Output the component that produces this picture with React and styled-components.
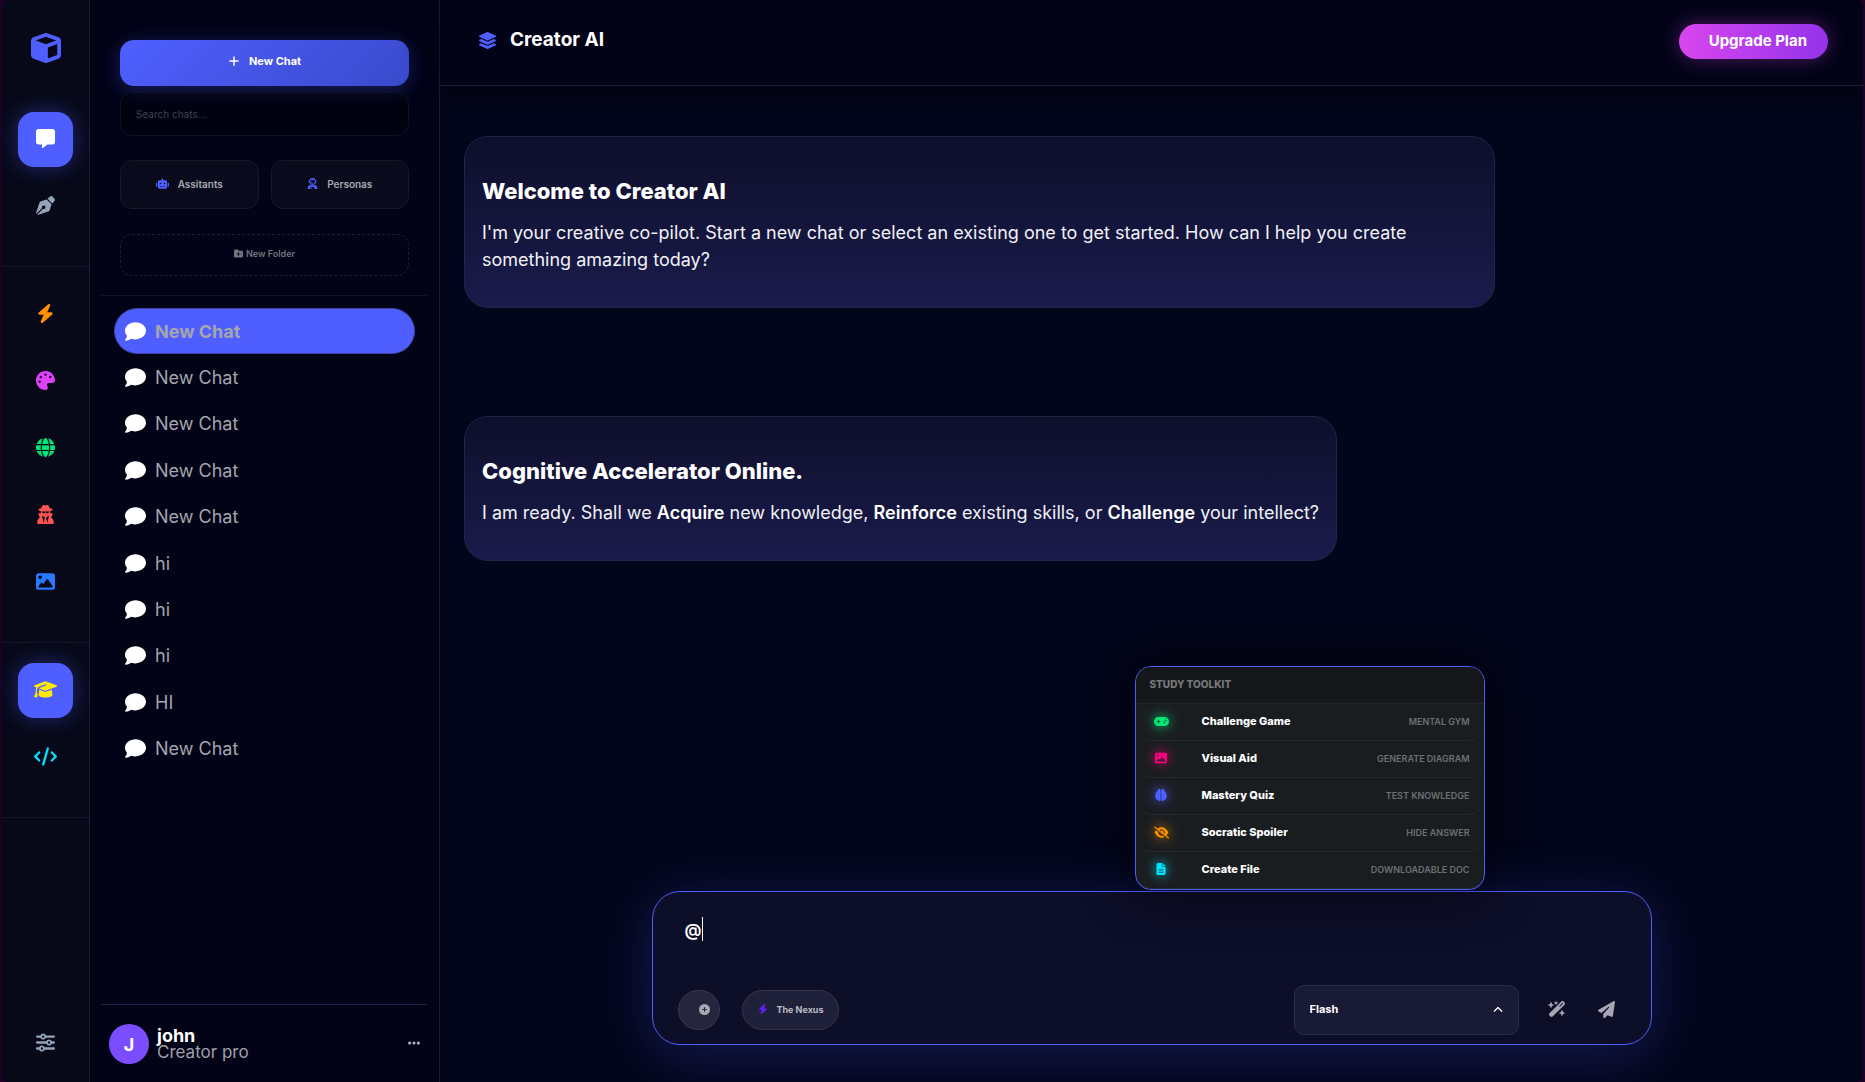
import React, { useState } from "react";
import styled, { createGlobalStyle } from "styled-components";
import {
  FaBolt,
  FaBrain,
  FaChevronUp,
  FaCirclePlus,
  FaCode,
  FaComment,
  FaCube,
  FaEllipsis,
  FaEyeSlash,
  FaFileLines,
  FaFolderPlus,
  FaGamepad,
  FaGlobe,
  FaGraduationCap,
  FaImage,
  FaLayerGroup,
  FaMessage,
  FaPalette,
  FaPaperPlane,
  FaPenNib,
  FaPlus,
  FaRobot,
  FaSliders,
  FaUserAstronaut,
  FaUserSecret,
  FaWandMagicSparkles,
} from "react-icons/fa6";

const GlobalStyle = createGlobalStyle`
  * {
    box-sizing: border-box;
  }

  body {
    margin: 0;
    background-color: #1c0026;
    color: #ffffff;
    font-family: Inter, "Liberation Sans", sans-serif;
  }

  button, input, select, textarea {
    font-family: inherit;
    color: inherit;
    margin: 0;
  }

  button {
    cursor: pointer;
  }

  svg {
    display: block;
    flex-shrink: 0;
  }
`;

const Shell = styled.div`
  display: flex;
  height: 100vh;
  margin: 0 2px;
  border-radius: 8px;
  overflow: hidden;
  background-color: #020317;
`;

const Rail = styled.nav`
  display: flex;
  flex-direction: column;
  flex-shrink: 0;
  width: 88px;
  background-color: #070919;
  border-right: 1px solid #1b1d30;
`;

const Logo = styled.a`
  display: flex;
  justify-content: center;
  padding: 33px 0 29px;
  font-size: 30px;
  color: #4f5fff;
`;

const RailGroup = styled.div`
  display: flex;
  flex-direction: column;
  align-items: center;
  gap: 12px;
  padding: 20px 0 32px;
  border-bottom: 1px solid #14162a;
`;

const RailButton = styled.button`
  display: flex;
  align-items: center;
  justify-content: center;
  width: 55px;
  height: 55px;
  padding: 0 0 2px;
  border: none;
  border-radius: 16px;
  font-size: ${(props) => (props.$wide ? "23px" : "19px")};
  color: ${(props) => props.$color || "#94a3b8"};
  background-color: ${(props) => (props.$active ? "#4f5fff" : "transparent")};
  box-shadow: ${(props) =>
    props.$active ? "0 0 20px rgba(79, 95, 255, 0.4)" : "none"};
`;

const RailFooter = styled.div`
  display: flex;
  justify-content: center;
  margin-top: auto;
  padding-bottom: 11px;
`;

const Sidebar = styled.aside`
  display: flex;
  flex-direction: column;
  flex-shrink: 0;
  width: 350px;
  padding: 0 12px 0 11px;
  background-color: #020317;
  border-right: 1px solid #1b1d38;
`;

const SidebarTop = styled.div`
  display: flex;
  flex-direction: column;
  padding: 40px 18px 19px 19px;
  border-bottom: 1px solid #101226;
`;

const NewChatButton = styled.button`
  display: flex;
  align-items: center;
  justify-content: center;
  gap: 9px;
  height: 46px;
  padding: 0 0 4px;
  border: none;
  border-radius: 14px;
  font-size: 11px;
  font-weight: 700;
  background: linear-gradient(135deg, #4f5fff, #3a4acc);
  box-shadow: 0 4px 20px rgba(79, 95, 255, 0.3);
`;

const SearchInput = styled.input`
  height: 44px;
  margin-top: 6px;
  padding: 0 15px 1px;
  border: 1px solid #10121f;
  border-radius: 12px;
  font-size: 10px;
  background-color: rgba(0, 0, 0, 0.3);
  outline: none;

  &::placeholder {
    color: #3f4152;
    opacity: 1;
  }
`;

const Shortcuts = styled.div`
  display: grid;
  grid-template-columns: 1fr 1fr;
  gap: 12px;
  margin-top: 24px;
`;

const ShortcutButton = styled.button`
  display: flex;
  align-items: center;
  justify-content: center;
  gap: 9px;
  height: 49px;
  padding: 0 0 2px;
  border: 1px solid #171929;
  border-radius: 12px;
  font-size: 10px;
  font-weight: 600;
  color: #a7a8b2;
  background-color: #090b1c;

  svg {
    font-size: ${(props) => (props.$wide ? "13px" : "11px")};
    color: #4f5fff;
  }
`;

const NewFolderButton = styled.button`
  display: flex;
  align-items: center;
  justify-content: center;
  gap: 3px;
  height: 42px;
  margin-top: 25px;
  padding: 0 0 3px;
  border: 1px dashed #1d1f31;
  border-radius: 12px;
  font-size: 9px;
  font-weight: 600;
  color: #72757f;
  background-color: transparent;
`;

const ChatList = styled.ul`
  display: grid;
  grid-auto-rows: 1fr;
  min-height: 464px;
  margin: 12px 0 0;
  padding: 0 12px 0 13px;
  list-style: none;
`;

const ChatItem = styled.button`
  display: flex;
  align-items: center;
  gap: 9px;
  width: 100%;
  height: 46px;
  padding: 0 10px;
  border: 1px solid ${(props) => (props.$active ? "#3c44a0" : "transparent")};
  border-radius: 23px;
  font-size: 18px;
  font-weight: ${(props) => (props.$active ? 700 : 400)};
  color: #a5a5ad;
  background-color: ${(props) => (props.$active ? "#4f5fff" : "transparent")};

  svg {
    font-size: 21px;
    color: #ffffff;
  }
`;

const Profile = styled.div`
  display: flex;
  align-items: center;
  gap: 8px;
  margin-top: auto;
  padding: 19px 6px 18px 8px;
  border-top: 1px solid #20224a;
`;

const Avatar = styled.div`
  display: flex;
  align-items: center;
  justify-content: center;
  width: 40px;
  height: 40px;
  border-radius: 50%;
  font-size: 18px;
  font-weight: 700;
  background-color: #7c4dff;
`;

const ProfileText = styled.div`
  flex: 1;
  font-size: 17px;
  line-height: 17px;
  color: #a0a0a8;

  strong {
    display: block;
    font-size: 18px;
    color: #ffffff;
  }
`;

const MenuButton = styled.button`
  padding: 0 0 2px;
  border: none;
  font-size: 14px;
  color: #b4b5bd;
  background-color: transparent;
`;

const Main = styled.main`
  display: flex;
  flex-direction: column;
  flex: 1;
  min-width: 0;
  background-color: #03051a;
`;

const Header = styled.header`
  display: flex;
  align-items: center;
  justify-content: space-between;
  height: 86px;
  padding: 0 35px 3px 38px;
  border-bottom: 1px solid #1c1e32;
  background-color: #020317;
  box-shadow: 0 4px 24px rgba(0, 0, 0, 0.5);
`;

const Title = styled.h1`
  display: flex;
  align-items: center;
  gap: 13px;
  margin: 0;
  padding-bottom: 2px;
  font-size: 19px;
  line-height: 24px;
  font-weight: 700;

  svg {
    color: #4f5fff;
  }
`;

const UpgradeButton = styled.button`
  height: 35px;
  padding: 0 21px 1px 30px;
  border: none;
  border-radius: 18px;
  font-size: 15px;
  font-weight: 700;
  background: linear-gradient(90deg, #d946ef, #9333ea);
  box-shadow: 0 0 20px rgba(217, 70, 239, 0.35);
`;

const Messages = styled.section`
  display: flex;
  flex-direction: column;
  align-items: flex-start;
  flex: 1;
  gap: 108px;
  min-height: 0;
  padding: 50px 24px 0;
`;

const MessageCard = styled.article`
  max-width: 75%;
  padding: 38px 17px 34px;
  border: 1px solid #22244a;
  border-radius: 24px;
  background: linear-gradient(180deg, #0e0f2b, #1a1b4b);

  h2 {
    margin: 0 0 12px;
    font-size: 22px;
    line-height: 32px;
    font-weight: 800;
  }

  p {
    margin: 0;
    font-size: 18px;
    line-height: 27px;
    color: #f1f1f6;
  }

  strong {
    font-weight: 600;
    color: #ffffff;
  }
`;

const ComposerArea = styled.div`
  padding: 0 24px 37px;
`;

const Composer = styled.form`
  position: relative;
  display: flex;
  flex-direction: column;
  max-width: 1000px;
  margin: 0 auto;
  padding: 25px 36px 9px 25px;
  border: 1px solid #4f5fff;
  border-radius: 28px;
  background-color: #0d0e28;
  box-shadow: 0 10px 60px rgba(79, 95, 255, 0.25);
`;

const PromptField = styled.div`
  position: relative;
  display: flex;
`;

const Prompt = styled.textarea`
  flex: 1;
  height: 68px;
  padding: 0 7px;
  border: none;
  outline: none;
  resize: none;
  font-size: 17px;
  font-weight: 600;
  line-height: 26px;
  caret-color: transparent;
  background-color: transparent;
`;

const Caret = styled.span`
  position: absolute;
  top: 0;
  left: 24px;
  width: 1px;
  height: 24px;
  background-color: #ffffff;
`;

const ComposerBar = styled.div`
  display: flex;
  align-items: center;
`;

const AttachButton = styled.button`
  display: flex;
  align-items: center;
  justify-content: flex-end;
  width: 42px;
  height: 40px;
  padding: 0 9px 2px 0;
  border: 1px solid #37384e;
  border-radius: 20px;
  font-size: 11px;
  color: #a9a9b4;
  background-color: #25263d;
`;

const ModeButton = styled.button`
  display: flex;
  align-items: center;
  gap: 9px;
  height: 40px;
  margin-left: 22px;
  padding: 0 14px 2px 15px;
  border: 1px solid #34354d;
  border-radius: 20px;
  font-size: 9px;
  font-weight: 700;
  color: #bcbcc4;
  background-color: #1f2039;

  svg {
    font-size: 10px;
    color: #651fff;
  }
`;

const ModelPicker = styled.div`
  position: relative;
  display: flex;
  align-items: center;
  width: 225px;
  margin-left: auto;

  svg {
    position: absolute;
    right: 16px;
    font-size: 10px;
    pointer-events: none;
  }
`;

const ModelSelect = styled.select`
  appearance: none;
  width: 100%;
  height: 50px;
  padding: 0 15px 2px;
  border: 1px solid #2b2c46;
  border-radius: 10px;
  outline: none;
  font-size: 11px;
  font-weight: 700;
  background-color: #191a35;
`;

const ActionButton = styled.button`
  margin-left: ${(props) => props.$gap};
  padding: 0 0 2px;
  border: none;
  font-size: 17px;
  color: #a9a5b4;
  background-color: transparent;
`;

const Toolkit = styled.div`
  position: absolute;
  right: 166px;
  bottom: calc(100% + 2px);
  width: 350px;
  border: 1px solid #4f5fff;
  border-radius: 16px;
  overflow: hidden;
  background-color: #1a1d20;
  box-shadow: 0 0 50px rgba(0, 0, 0, 0.6);
`;

const ToolkitTitle = styled.div`
  padding: 0 14px 2px;
  border-bottom: 1px solid #232528;
  font-size: 10px;
  line-height: 34px;
  font-weight: 800;
  color: #77797c;
  background-color: #16171a;
`;

const Tool = styled.button`
  display: flex;
  align-items: center;
  width: 100%;
  height: 37px;
  padding: 0 14px 2px;
  border: none;
  border-bottom: 1px solid #26292c;
  border-radius: 16px;
  text-align: left;
  background-color: transparent;
`;

const ToolIcon = styled.span`
  display: flex;
  justify-content: center;
  width: 23px;
  margin-right: 29px;
  font-size: ${(props) => (props.$wide ? "15px" : "12px")};
  color: ${(props) => props.$color};
  filter: drop-shadow(0 0 6px ${(props) => props.$color});
`;

const ToolName = styled.span`
  flex: 1;
  font-size: 11px;
  font-weight: 800;
`;

const ToolHint = styled.span`
  font-size: 9px;
  font-weight: 600;
  color: #6d6f72;
`;

const railGroups = [
  [
    { id: "chat", label: "Chat", icon: FaMessage, color: "#ffffff", active: true },
    { id: "write", label: "Write", icon: FaPenNib },
  ],
  [
    { id: "flash", label: "Flash", icon: FaBolt, color: "#ff9100" },
    { id: "design", label: "Design", icon: FaPalette, color: "#e040fb" },
    { id: "web", label: "Web", icon: FaGlobe, color: "#00e676" },
    { id: "agent", label: "Agent", icon: FaUserSecret, color: "#ff5252" },
    { id: "images", label: "Images", icon: FaImage, color: "#2979ff" },
  ],
  [
    {
      id: "study",
      label: "Study",
      icon: FaGraduationCap,
      color: "#ffea00",
      active: true,
      wide: true,
    },
    { id: "code", label: "Code", icon: FaCode, color: "#00e5ff", wide: true },
  ],
];

const chats = [
  "New Chat",
  "New Chat",
  "New Chat",
  "New Chat",
  "New Chat",
  "hi",
  "hi",
  "hi",
  "HI",
  "New Chat",
];

const tools = [
  { name: "Challenge Game", hint: "MENTAL GYM", icon: FaGamepad, color: "#00e676", wide: true },
  { name: "Visual Aid", hint: "GENERATE DIAGRAM", icon: FaImage, color: "#ff0080" },
  { name: "Mastery Quiz", hint: "TEST KNOWLEDGE", icon: FaBrain, color: "#4f5fff" },
  { name: "Socratic Spoiler", hint: "HIDE ANSWER", icon: FaEyeSlash, color: "#ff9100", wide: true },
  { name: "Create File", hint: "DOWNLOADABLE DOC", icon: FaFileLines, color: "#00e5ff" },
];

const NavRail = () => (
  <Rail>
    <Logo href="#" aria-label="Home">
      <FaCube />
    </Logo>
    {railGroups.map((group) => (
      <RailGroup key={group[0].id}>
        {group.map(({ id, label, icon: Icon, color, active, wide }) => (
          <RailButton key={id} aria-label={label} $color={color} $active={active} $wide={wide}>
            <Icon />
          </RailButton>
        ))}
      </RailGroup>
    ))}
    <RailFooter>
      <RailButton aria-label="Settings">
        <FaSliders />
      </RailButton>
    </RailFooter>
  </Rail>
);

const ChatSidebar = () => {
  const [selected, setSelected] = useState(0);

  return (
    <Sidebar>
      <SidebarTop>
        <NewChatButton>
          <FaPlus size={12} />
          New Chat
        </NewChatButton>
        <SearchInput type="search" placeholder="Search chats..." aria-label="Search chats" />
        <Shortcuts>
          <ShortcutButton $wide>
            <FaRobot />
            Assitants
          </ShortcutButton>
          <ShortcutButton>
            <FaUserAstronaut />
            Personas
          </ShortcutButton>
        </Shortcuts>
        <NewFolderButton>
          <FaFolderPlus />
          New Folder
        </NewFolderButton>
      </SidebarTop>
      <ChatList>
        {chats.map((chat, index) => (
          <li key={index}>
            <ChatItem $active={index === selected} onClick={() => setSelected(index)}>
              <FaComment />
              {chat}
            </ChatItem>
          </li>
        ))}
      </ChatList>
      <Profile>
        <Avatar>J</Avatar>
        <ProfileText>
          <strong>john</strong>
          Creator pro
        </ProfileText>
        <MenuButton aria-label="Account menu">
          <FaEllipsis />
        </MenuButton>
      </Profile>
    </Sidebar>
  );
};

const StudyToolkit = () => (
  <Toolkit>
    <ToolkitTitle>STUDY TOOLKIT</ToolkitTitle>
    {tools.map(({ name, hint, icon: Icon, color, wide }) => (
      <Tool key={name} type="button">
        <ToolIcon $color={color} $wide={wide}>
          <Icon />
        </ToolIcon>
        <ToolName>{name}</ToolName>
        <ToolHint>{hint}</ToolHint>
      </Tool>
    ))}
  </Toolkit>
);

const PromptComposer = () => {
  const [prompt, setPrompt] = useState("@");

  return (
    <Composer onSubmit={(event) => event.preventDefault()}>
      {prompt.startsWith("@") && <StudyToolkit />}
      <PromptField>
        <Prompt
          aria-label="Message"
          value={prompt}
          onChange={(event) => setPrompt(event.target.value)}
        />
        {prompt === "@" && <Caret />}
      </PromptField>
      <ComposerBar>
        <AttachButton type="button" aria-label="Attach">
          <FaCirclePlus />
        </AttachButton>
        <ModeButton type="button">
          <FaBolt />
          The Nexus
        </ModeButton>
        <ModelPicker>
          <ModelSelect aria-label="Model" defaultValue="flash">
            <option value="flash">Flash</option>
          </ModelSelect>
          <FaChevronUp />
        </ModelPicker>
        <ActionButton type="button" aria-label="Enhance prompt" $gap="29px">
          <FaWandMagicSparkles size={18} />
        </ActionButton>
        <ActionButton type="submit" aria-label="Send" $gap="32px">
          <FaPaperPlane />
        </ActionButton>
      </ComposerBar>
    </Composer>
  );
};

const App = () => (
  <>
    <GlobalStyle />
    <Shell>
      <NavRail />
      <ChatSidebar />
      <Main>
        <Header>
          <Title>
            <FaLayerGroup />
            Creator AI
          </Title>
          <UpgradeButton>Upgrade Plan</UpgradeButton>
        </Header>
        <Messages>
          <MessageCard>
            <h2>Welcome to Creator AI</h2>
            <p>
              I'm your creative co-pilot. Start a new chat or select an existing one to get
              started. How can I help you create something amazing today?
            </p>
          </MessageCard>
          <MessageCard>
            <h2>Cognitive Accelerator Online.</h2>
            <p>
              I am ready. Shall we <strong>Acquire</strong> new knowledge,{" "}
              <strong>Reinforce</strong> existing skills, or <strong>Challenge</strong> your
              intellect?
            </p>
          </MessageCard>
        </Messages>
        <ComposerArea>
          <PromptComposer />
        </ComposerArea>
      </Main>
    </Shell>
  </>
);

export default App;
